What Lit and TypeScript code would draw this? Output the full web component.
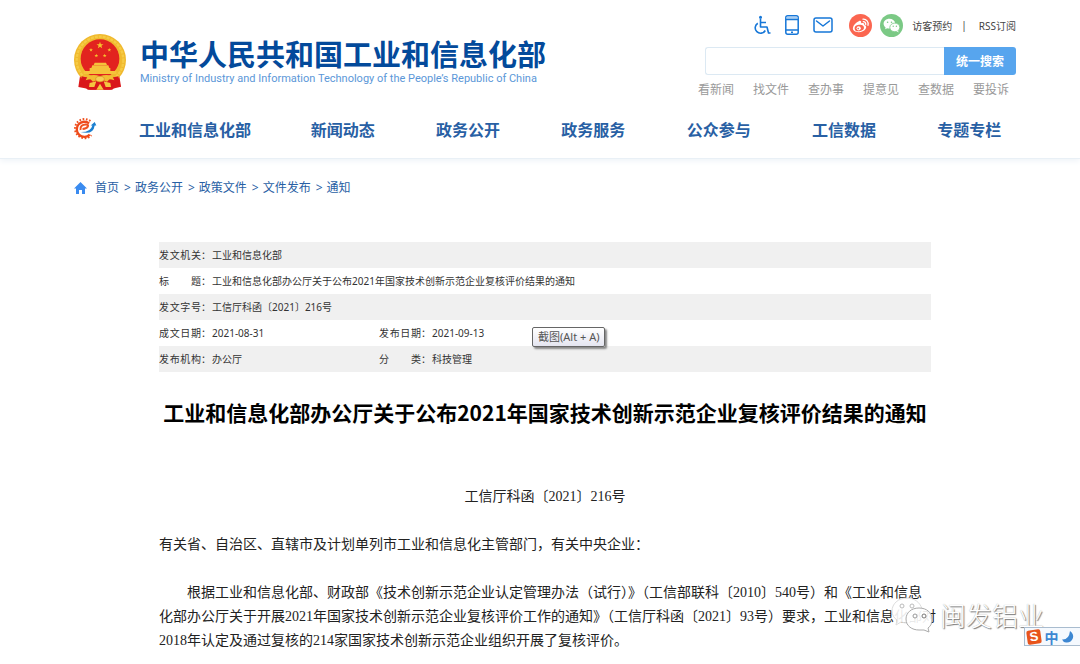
import { LitElement, html, css, svg } from "lit";
import { customElement } from "lit/decorators.js";

const NAV = ["工业和信息化部", "新闻动态", "政务公开", "政务服务", "公众参与", "工信数据", "专题专栏"];
const QUICK = ["看新闻", "找文件", "查办事", "提意见", "查数据", "要投诉"];
const CRUMBS = ["首页", "政务公开", "政策文件", "文件发布", "通知"];
const TITLE = "工业和信息化部办公厅关于公布2021年国家技术创新示范企业复核评价结果的通知";

const STAR = "M0-10 2.4-3.2 9.5-3.1 3.8 1.2 5.9 8.1 0 4-5.9 8.1-3.8 1.2-9.5-3.1-2.4-3.2Z";
const star = (x: number, y: number, s: number) =>
  svg`<path d=${STAR} fill="#f6c52c" transform="translate(${x} ${y}) scale(${s})"/>`;

const emblem = html`<svg class="emblem" viewBox="24 19 158 168" aria-hidden="true">
  <path d="M44 138 38 178 58 182 74 186H132L150 181 166 177 160 138Z" fill="#dd1a1c"/>
  <circle cx="103" cy="97" r="78" fill="#f0b92e"/>
  <circle cx="103" cy="97" r="70" fill="none" stroke="#f6cb45" stroke-width="7" stroke-dasharray="9 3"/>
  <circle cx="103" cy="93" r="58" fill="#e2231f"/>
  <path d="M48 146 70 150 82 162 103 153 124 162 136 150 158 146 165 178 148 176 140 186H66L58 176 41 178Z" fill="#d9161a"/>
  ${star(103, 53, 1.1)}${star(76, 67, 0.6)}${star(131, 67, 0.6)}${star(92, 84, 0.6)}${star(117, 84, 0.6)}
  <path d="M87 105H121L124 112H84ZM80 113H128L131 121H77ZM72 121H134V130H152V139H54V130H72Z" fill="#f5c33b"/>
  <path d="M66 146Q84 138 103 146 122 138 140 146L146 158Q124 150 103 164 82 150 60 158Z" fill="#f2bd33"/>
  <ellipse cx="103" cy="154" rx="13" ry="8" fill="#f6cf55" stroke="#d98a22" stroke-width="2"/>
  <path d="M72 166 92 161 86 178 70 178ZM134 166 114 161 120 178 136 178ZM92 186 103 168 114 186Z" fill="#f4c440"/>
</svg>`;

const gearLogo = html`<svg class="gear" viewBox="34 24 76 66" aria-hidden="true">
  <path d="M90 33A29 29 0 1 0 93 76" fill="none" stroke="#ee4f1d" stroke-width="6" stroke-dasharray="5 5"/>
  <path d="M86 40A23 23 0 1 0 88 74" fill="none" stroke="#ee4a1b" stroke-width="7"/>
  <path d="M60 60C58 49 66 43 76 43 88 43 84 55 66 57" fill="none" stroke="#f0521f" stroke-width="6"/>
  <path d="M60 66Q91 67 96 46L91 46 103 36 108 46 103 46Q99 76 60 66Z" fill="#1b7fd0"/>
</svg>`;

const wheelchair = html`<svg width="18" height="20" viewBox="0 0 18 20" fill="none" stroke="#1677d8" stroke-width="1.6" aria-hidden="true">
  <circle cx="7.500" cy="2.200" r="1.500" fill="#1677d8" stroke="none"/>
  <path d="M7.500 3.500V12H14L15.500 18H17.500M7.500 7.500H13M4.800 8.200A5.400 5.400 0 1 0 12.300 15.500" stroke-linejoin="round"/>
</svg>`;
const phone = html`<svg width="14" height="20" viewBox="0 0 14 20" fill="none" stroke="#1677d8" stroke-width="1.500" aria-hidden="true">
  <rect x=".8" y=".8" width="12.400" height="18.400" rx="2"/><path d="M1.500 2.800H12.500" stroke="#a9cef2" stroke-width="2"/><path d="M1 4.500H13M1 15H13"/><path d="M6 17.200H8"/>
</svg>`;
const mail = html`<svg width="20" height="16" viewBox="0 0 20 16" fill="none" stroke="#1677d8" stroke-width="1.500" aria-hidden="true">
  <rect x="1" y="1" width="18" height="14" rx="2"/><path d="M3.500 4 10 9 16.500 4" stroke-linecap="round" stroke-linejoin="round"/>
</svg>`;
const weibo = html`<svg width="23" height="23" viewBox="0 0 23 23" aria-hidden="true">
  <circle cx="11.500" cy="11.500" r="11.500" fill="#fb6650"/>
  <path d="M9.800 7.200C11.600 6.200 12.600 7.300 12.100 9.300 14.400 8.500 15.900 9.200 15.200 11.100 17.200 11.700 17.700 13.100 16.700 14.800 14.800 18.200 8.300 19.400 5 16.800 1.900 14 6 8.800 9.800 7.200Z" fill="#fff"/>
  <ellipse cx="10.300" cy="14" rx="4.700" ry="3.200" fill="#fb6650" transform="rotate(-8 10.300 14)"/>
  <circle cx="9.700" cy="14.300" r="2.100" fill="#fff"/><circle cx="9.200" cy="14.600" r=".8" fill="#fb6650"/>
  <path d="M14 5.200A4.800 4.800 0 0 1 19 11.300M14.300 7.700A2.300 2.300 0 0 1 16.700 10.500" fill="none" stroke="#fff" stroke-width="1.300" stroke-linecap="round"/>
</svg>`;
const wechat = html`<svg width="23" height="23" viewBox="0 0 23 23" aria-hidden="true">
  <circle cx="11.500" cy="11.500" r="11.500" fill="#7bc985"/>
  <path d="M9.500 4.800C6 4.800 3.600 7 3.600 9.700 3.600 11.200 4.400 12.500 5.600 13.400L5.100 15.200 7.200 14.200Q8.500 14.500 9.600 14.400C15 14 15.300 11 15.200 9 14.700 6.500 12.300 4.800 9.500 4.800Z" fill="#fff"/>
  <ellipse cx="14.800" cy="13.400" rx="5" ry="4.300" fill="#fff" stroke="#7bc985" stroke-width=".8"/>
  <path d="M16.500 17 18.600 18.500 18 16.500Z" fill="#fff"/>
  <g fill="#7bc985"><circle cx="7.600" cy="8.300" r=".8"/><circle cx="11.500" cy="8.300" r=".8"/><circle cx="13.200" cy="12.300" r=".7"/><circle cx="16.400" cy="12.300" r=".7"/></g>
</svg>`;

@customElement("app-root")
export class AppRoot extends LitElement {
  static styles = css`
    :host { display: block; position: relative; min-height: 100vh; background: #fff; color: #333; overflow: hidden;
      font-family: "Noto Sans", "Noto Sans CJK SC", sans-serif; font-size: 12px; }
    * { box-sizing: border-box; }
    a { color: inherit; text-decoration: none; }
    svg { display: block; flex: none; }
    h1, h2, p, dl, dd, dt, ol, ul { margin: 0; padding: 0; list-style: none; }
    .header { padding: 13px 64px 17px 72px; border-bottom: 1px solid #e9f0f6; box-shadow: 0 2px 6px #eef3f8; }
    .top { display: flex; justify-content: space-between; }
    .brand { display: flex; gap: 13px; padding: 21px 0 0 1px; }
    .emblem { width: 54px; height: 56px; }
    .name { font: 700 29px/38px "Noto Sans CJK SC", sans-serif; color: #034a9b; white-space: nowrap; }
    .english { font: 11px/14px Roboto, sans-serif; color: #5b97d8; white-space: nowrap; }
    .tools { width: 318px; }
    .utility { display: flex; align-items: center; justify-content: flex-end; height: 24px; font-size: 10px; white-space: nowrap; color: #444; }
    .line-icons { display: flex; align-items: center; gap: 14px; margin-right: 16px; }
    .social { display: flex; gap: 8px; margin-right: 9px; }
    .bar { padding: 0 12px 0 9px; }
    .search { display: flex; height: 28px; margin: 10px 0 0 7px; }
    .search input { flex: 1; min-width: 0; border: 1px solid #dce9f3; border-right: 0; border-radius: 3px 0 0 3px; outline: 0; padding: 0 8px; }
    .search button { width: 72px; padding: 0; border: 0; border-radius: 0 3px 3px 0; background: #57a5ee; color: #fff; font: 700 12px/28px "Noto Sans CJK SC", sans-serif; }
    .quick { display: flex; justify-content: space-between; padding: 6px 7px 0 0; line-height: 18px; color: #999; }
    .nav { display: flex; align-items: center; margin-top: 18px; height: 24px; }
    .gear { width: 25px; height: 22px; }
    .menu { flex: 1; display: grid; grid-template-columns: 170px repeat(6, 1fr); margin: 0 -16px 0 13px; text-align: center;
      font: 700 16px/24px "Noto Sans CJK SC", sans-serif; color: #2860a4; white-space: nowrap; }
    .crumbs { display: flex; align-items: center; padding: 20px 74px 0; line-height: 18px; color: #2860a4; }
    .crumbs svg { margin-right: 8px; }
    .crumbs li + li::before { content: ">"; padding: 0 4px 0 5px; }
    .crumbs ol { display: flex; }
    .article { padding: 45px 149px 0 159px; }
    .meta { font-size: 10px; line-height: 26px; color: #333; }
    .row { display: flex; white-space: nowrap; }
    .row:nth-child(odd) { background: #f0f0f0; }
    .pair { display: flex; min-width: 220px; }
    .pair dt { display: flex; width: 53px; }
    .label { width: 42px; text-align: justify; text-align-last: justify; }
    .headline { margin-top: 23px; font: 700 21px/34px "Noto Sans CJK SC", sans-serif; color: #000; text-align: center; white-space: nowrap; display: flex; justify-content: center; }
    .body { margin-top: 56px; font: 14px/24px "Liberation Serif", "Noto Sans CJK SC", sans-serif; color: #222; white-space: nowrap; }
    .body p + p { margin-top: 24px; }
    .number { text-align: center; }
    .indent { text-indent: 2em; }
    .tip { position: absolute; left: 532px; top: 327px; padding: 0 5px; height: 20px; border: 1px solid #666; border-radius: 2px;
      background: linear-gradient(#fff, #e4e5f0); box-shadow: 2px 2px 2px #888; font-size: 11px; line-height: 18px; color: #555; white-space: nowrap; }
    .mark { position: absolute; right: 36px; bottom: 29px; display: flex; align-items: center; gap: 7px; color: #fff;
      font: 300 26px/40px "Noto Sans CJK SC", sans-serif; text-shadow: 1px 1px 1px #777, 0 0 1px #aaa; white-space: nowrap; }
    .ime { position: absolute; right: 0; bottom: 18px; width: 56px; height: 19px; display: flex; align-items: center; justify-content: space-between; padding: 0 6px 0 2px;
      border: 1px solid #a9bccf; border-right: 0; background: #f5f9fe; color: #3d87d2; font: 700 14px/16px "Noto Sans CJK SC", sans-serif; }
    .sogou { width: 14px; height: 14px; border-radius: 2px; background: #e8541c; color: #fff; text-align: center; transform: rotate(-8deg); font: 700 13px/14px "Liberation Sans", sans-serif; }
  `;

  private pair(label: string, value: string) {
    return html`<div class="pair"><dt><span class="label">${label}</span>：</dt><dd>${value}</dd></div>`;
  }

  render() {
    return html`
      <header class="header">
        <div class="top">
          <div class="brand">
            ${emblem}
            <div>
              <h2 class="name">中华人民共和国工业和信息化部</h2>
              <p class="english">Ministry of Industry and Information Technology of the People’s Republic of China</p>
            </div>
          </div>
          <div class="tools">
            <div class="utility">
              <div class="line-icons">
                <a href="#" aria-label="无障碍">${wheelchair}</a><a href="#" aria-label="手机版">${phone}</a><a href="#" aria-label="邮箱">${mail}</a>
              </div>
              <div class="social"><a href="#" aria-label="微博">${weibo}</a><a href="#" aria-label="微信">${wechat}</a></div>
              <a href="#">访客预约</a><span class="bar">|</span><a href="#">RSS订阅</a>
            </div>
            <form class="search" @submit=${(e: Event) => e.preventDefault()}>
              <input type="search" aria-label="搜索"><button>统一搜索</button>
            </form>
            <div class="quick">${QUICK.map((q) => html`<a href="#">${q}</a>`)}</div>
          </div>
        </div>
        <nav class="nav">${gearLogo}<div class="menu">${NAV.map((n) => html`<a href="#">${n}</a>`)}</div></nav>
      </header>
      <nav class="crumbs">
        <svg width="13" height="12" viewBox="0 0 13 12" aria-hidden="true"><path d="M6.500 0 13 6.500H11V12H8V8H5V12H2V6.500H0Z" fill="#3a8bf0"/></svg>
        <ol>${CRUMBS.map((c) => html`<li><a href="#">${c}</a></li>`)}</ol>
      </nav>
      <main class="article">
        <dl class="meta">
          <div class="row">${this.pair("发文机关", "工业和信息化部")}</div>
          <div class="row">${this.pair("标 题", TITLE)}</div>
          <div class="row">${this.pair("发文字号", "工信厅科函〔2021〕216号")}</div>
          <div class="row">${this.pair("成文日期", "2021-08-31")}${this.pair("发布日期", "2021-09-13")}</div>
          <div class="row">${this.pair("发布机构", "办公厅")}${this.pair("分 类", "科技管理")}</div>
        </dl>
        <h1 class="headline">${TITLE}</h1>
        <div class="body">
          <p class="number">工信厅科函〔2021〕216号</p>
          <p>有关省、自治区、直辖市及计划单列市工业和信息化主管部门，有关中央企业：</p>
          <p class="indent">根据工业和信息化部、财政部《技术创新示范企业认定管理办法（试行）》（工信部联科〔2010〕540号）和《工业和信息<br>化部办公厅关于开展2021年国家技术创新示范企业复核评价工作的通知》（工信厅科函〔2021〕93号）要求，工业和信息化部对<br>2018年认定及通过复核的214家国家技术创新示范企业组织开展了复核评价。</p>
        </div>
      </main>
      <div class="tip" role="tooltip">截图(Alt + A)</div>
      <div class="mark">
        <svg width="42" height="38" viewBox="0 0 42 38" fill="#fff" fill-opacity=".9" stroke="#aaa" stroke-width="1" aria-hidden="true">
          <path d="M16 2C7 2 1 8 1 15 1 19 3 22 6 24L5 29 10 26Q13 27 17 27L31 13C29 6 23 2 16 2Z" stroke="#ddd"/>
          <path d="M28 12C20 12 15 17 15 23 15 30 21 34 28 34L33 34 38 36 37 32C40 30 41 27 41 23 41 17 36 12 28 12Z" stroke="#aaa"/>
          <g fill="#fff" stroke="#bbb"><circle cx="11" cy="10" r="2"/><circle cx="21" cy="10" r="2"/><circle cx="24" cy="20" r="2" stroke="#999"/><circle cx="33" cy="20" r="2" stroke="#777"/></g>
        </svg>
        <span>闽发铝业</span>
      </div>
      <div class="ime">
        <span class="sogou">S</span><span>中</span>
        <svg width="12" height="12" viewBox="0 0 12 12" aria-hidden="true"><path d="M8 0Q12 3 11 7 9 12 4 11.500 1 11 0 8.500 7 9 8 0Z" fill="#3d87d2"/></svg>
      </div>`;
  }
}
